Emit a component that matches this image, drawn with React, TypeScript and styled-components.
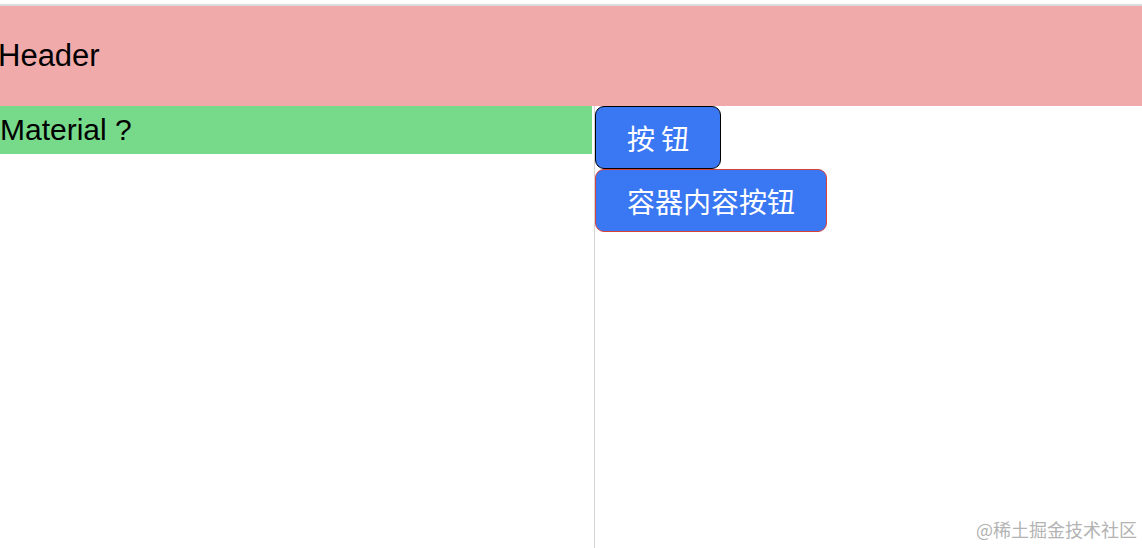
import React from 'react';
import styled, { createGlobalStyle } from 'styled-components';

const GlobalStyle = createGlobalStyle`
  html, body {
    margin: 0;
    padding: 0;
    background: #ffffff;
  }
  body {
    font-family: 'Liberation Sans', Arial, 'Noto Sans CJK SC', sans-serif;
    overflow: hidden;
  }
`;

const App = () => {
  return (
    <>
      <GlobalStyle />
      <Page>
        <Header>
          <HeaderTitle>Header</HeaderTitle>
        </Header>
        <Body>
          <Sidebar>
            <MaterialBar>Material ?</MaterialBar>
          </Sidebar>
          <Content>
            <ActionButton borderColor='#000000'>按 钮</ActionButton>
            <ActionButton borderColor='#d9403a'>容器内容按钮</ActionButton>
          </Content>
        </Body>
        <Watermark>@稀土掘金技术社区</Watermark>
      </Page>
    </>
  );
};

export default App;

const Page = styled.div`
  position: relative;
  width: 1142px;
  height: 548px;
  padding-top: 4px;
  box-sizing: border-box;
  display: flex;
  flex-direction: column;
  overflow: hidden;
`;

const Header = styled.header`
  height: 100px;
  border-top: 2px solid #dcdcdc;
  background-color: #f0aaaa;
  display: flex;
  align-items: center;
`;

const HeaderTitle = styled.h1`
  margin: 0 0 0 -2px;
  font-size: 31px;
  font-weight: 400;
  color: #000000;
`;

const Body = styled.main`
  flex: 1;
  display: flex;
`;

const Sidebar = styled.aside`
  width: 594px;
  border-right: 1px solid #d4d4d4;
`;

const MaterialBar = styled.div`
  height: 48px;
  line-height: 48px;
  margin-right: 2px;
  background-color: #77d98a;
  font-size: 30px;
  color: #000000;
`;

const Content = styled.section`
  flex: 1;
  display: flex;
  flex-direction: column;
  align-items: flex-start;
`;

const ActionButton = styled.button<{ borderColor: string }>`
  box-sizing: border-box;
  height: 63px;
  padding: 0 31px;
  border: 1px solid ${p => p.borderColor};
  border-radius: 9px;
  background-color: #3a77f3;
  color: #ffffff;
  font-family: 'Noto Sans CJK SC', sans-serif;
  font-size: 28px;
  line-height: 1;
  cursor: pointer;
`;

const Watermark = styled.div`
  position: absolute;
  right: 5px;
  bottom: 6px;
  font-family: 'Noto Sans CJK SC', sans-serif;
  font-size: 18px;
  color: #b3b3b3;
`;
